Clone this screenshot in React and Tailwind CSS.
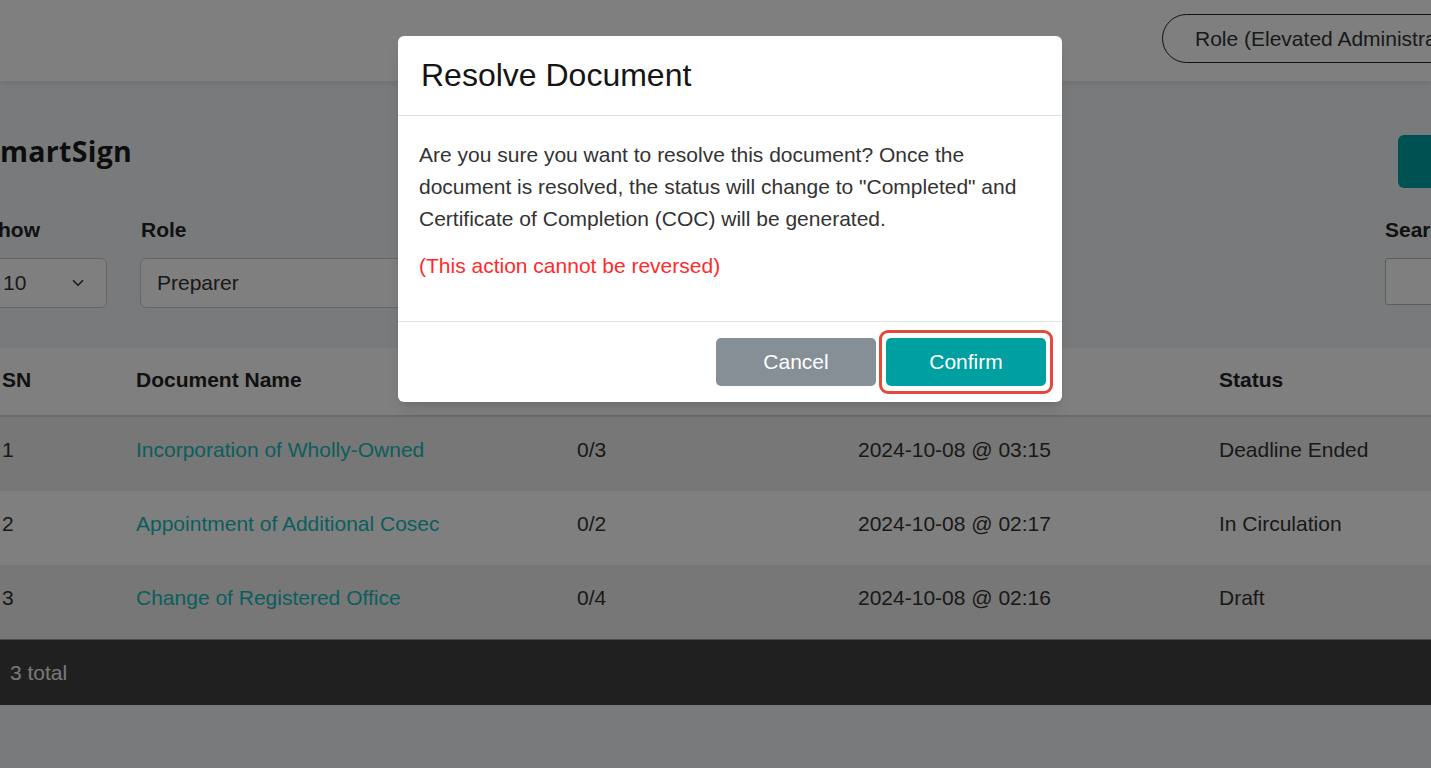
import React from 'react';
import { ChevronDown } from 'lucide-react';

// Documents shown behind the dialog
const documents = [
  { sn: 1, name: 'Incorporation of Wholly-Owned', signed: '0/3', created: '2024-10-08 @ 03:15', status: 'Deadline Ended' },
  { sn: 2, name: 'Appointment of Additional Cosec', signed: '0/2', created: '2024-10-08 @ 02:17', status: 'In Circulation' },
  { sn: 3, name: 'Change of Registered Office', signed: '0/4', created: '2024-10-08 @ 02:16', status: 'Draft' },
];

const cols = 'grid grid-cols-[134px_441px_281px_361px_1fr]';

export default function App() {
  return (
    <div className="relative w-full h-[768px] overflow-hidden bg-[#f3f5f9] font-['Liberation_Sans',Arial,sans-serif] text-[#222]">
      {/* Top bar */}
      <div className="h-[81px] bg-white shadow-[0_3px_6px_rgba(0,0,0,0.08)] flex items-start pt-[14px] pl-[1162px] relative z-10">
        <div className="h-[49px] flex items-center pl-[32px] pr-6 rounded-full border-[1.5px] border-[#222] whitespace-nowrap text-[21px] text-[#333]">
          Role (Elevated Administrator)
        </div>
      </div>

      {/* Page body, scrolled a little to the right */}
      <div className="w-[1640px] -ml-[16px] pr-[26px]">
        <div className="flex items-start justify-between pt-[54px]">
          <h1 className="font-['Open_Sans',sans-serif] font-bold text-[28.5px] leading-[32px] text-[#1b1b1b] tracking-[0.3px]">SmartSign</h1>
          <button className="w-[200px] h-[53px] rounded-md bg-[#00a4a4] text-white text-[18px] text-left pl-[40px]">New Document</button>
        </div>

        <div className="flex items-start justify-between mt-[30px]">
          <div className="flex gap-[33px]">
            <div>
              <div className="text-[21px] font-bold leading-[24px] mb-4">Show</div>
              <div className="w-[123px] h-[50px] rounded-md border border-[#ccc] bg-white flex items-center justify-between pl-[18px] pr-[19px] text-[21px] text-[#333]">
                <span>10</span>
                <ChevronDown className="w-[18px] h-[18px]" strokeWidth={2.2} />
              </div>
            </div>
            <div>
              <div className="text-[21px] font-bold leading-[24px] mb-4 pl-[1px]">Role</div>
              <div className="w-[380px] h-[50px] rounded-md border border-[#ccc] bg-white flex items-center pl-[16px] text-[21px] text-[#333]">
                Preparer
              </div>
            </div>
          </div>
          <div className="w-[213px]">
            <div className="text-[21px] font-bold leading-[24px] mb-4">Search</div>
            <div className="h-[47px] rounded-[3px] border border-[#bbb] bg-white" />
          </div>
        </div>

        {/* Table */}
        <div className="mt-[40px] bg-white text-[21px]">
          <div className={`${cols} h-[69px] items-center pb-[3px] border-b-2 border-[#d4d4d4] font-bold`}>
            <div className="pl-[18px]">SN</div>
            <div className="pl-[18px]">Document Name</div>
            <div className="pl-[18px]">Signatures</div>
            <div className="pl-[18px]">Created Date</div>
            <div className="pl-[18px]">Status</div>
          </div>
          {documents.map((doc, i) => (
            <div key={doc.sn} className={`${cols} h-[74px] items-center pb-[8px] text-[#333] ${i % 2 === 0 ? 'bg-[#eeeeee]' : 'bg-white'}`}>
              <div className="pl-[18px]">{doc.sn}</div>
              <div className="pl-[18px] text-[#16bcbc]">{doc.name}</div>
              <div className="pl-[18px]">{doc.signed}</div>
              <div className="pl-[18px]">{doc.created}</div>
              <div className="pl-[18px]">{doc.status}</div>
            </div>
          ))}
          <div className="h-[66px] bg-[#404040] border-t border-[#999] flex items-center pl-[26px] text-[#f2f2f2]">
            3 total
          </div>
        </div>
      </div>

      {/* Backdrop + dialog */}
      <div className="absolute inset-0 z-20 bg-black/50 pt-[36px] pl-[398px]">
        <div className="w-[664px] bg-white rounded-[6px] shadow-lg">
          <div className="h-[80px] flex items-center pb-[2px] px-[23px] border-b border-[#dee2e6]">
            <h2 className="text-[32px] text-[#151515]">Resolve Document</h2>
          </div>
          <div className="pt-[23px] pb-[39px] pl-[21px] pr-[28px] border-b border-[#dee2e6] text-[21px] leading-[32px] text-[#333]">
            <p>
              Are you sure you want to resolve this document? Once the document is resolved, the status will change to "Completed" and Certificate of Completion (COC) will be generated.
            </p>
            <p className="mt-[15px] text-[#ff2b2b]">(This action cannot be reversed)</p>
          </div>
          <div className="h-[80px] flex items-center justify-end gap-[10px] pr-[16px]">
            <button className="w-[160px] h-[48px] rounded-[5px] bg-[#868e96] text-white text-[21px]">Cancel</button>
            <div className="relative">
              <button className="w-[160px] h-[48px] rounded-[5px] bg-[#00a0a0] text-white text-[21px]">Confirm</button>
              <span className="absolute -inset-x-[7px] -inset-y-[8px] rounded-[9px] border-[3px] border-[#e04b3c] pointer-events-none" />
            </div>
          </div>
        </div>
      </div>
    </div>
  );
}
